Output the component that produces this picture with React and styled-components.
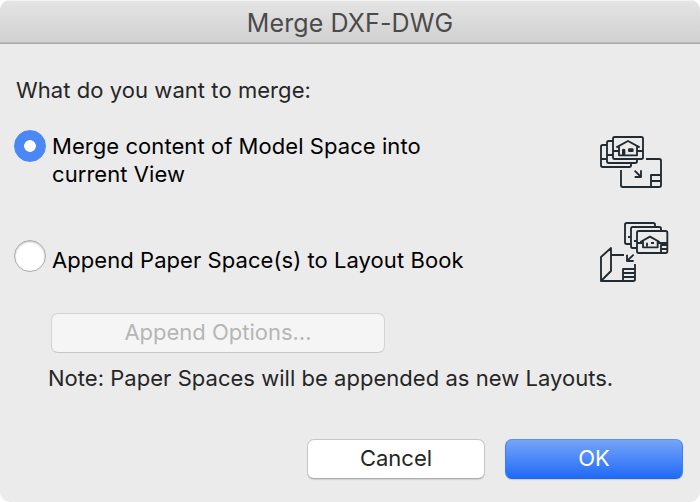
import { useState } from "react";
import styled, { createGlobalStyle, css } from "styled-components";

const GlobalStyle = createGlobalStyle`
  * {
    box-sizing: border-box;
  }

  body {
    margin: 0;
    background: #fff;
    font-family: Inter, "Liberation Sans", sans-serif;
  }
`;

const Dialog = styled.div`
  width: 700px;
  height: 502px;
  overflow: hidden;
  border-radius: 10px;
  background: #ebebeb;
  color: #000;
  font-size: 22px;
  line-height: 28px;
  white-space: nowrap;
`;

const TitleBar = styled.header`
  display: flex;
  align-items: center;
  justify-content: center;
  height: 44px;
  border-bottom: 1px solid #a8a8a8;
  background: linear-gradient(#e5e5e5, #d0d0d0);
  box-shadow: inset 0 1px 0 #f4f4f4, inset 0 -1px 0 #bdbdbd;
`;

const Title = styled.h1`
  margin: 0;
  padding-top: 2px;
  color: #4b4b4b;
  font-size: 25px;
  font-weight: 400;
  letter-spacing: 0.12px;
`;

const Text = styled.span`
  display: block;
  color: ${(props) => props.$color || "#000"};
  letter-spacing: ${(props) => props.$spacing || "0"};
`;

const Prompt = styled.div`
  padding: 32px 0 0 16px;
  height: 81px;
`;

const Option = styled.label`
  display: grid;
  grid-template-columns: 32px 1fr 90px;
  column-gap: 6px;
  align-items: start;
  height: ${(props) => props.$height};
  padding: 0 20px 0 14px;
`;

const Radio = styled.input`
  appearance: none;
  width: 32px;
  height: 32px;
  margin: ${(props) => props.$top} 0 0;
  border: 1px solid #acacac;
  border-radius: 50%;
  background: #fff;
  box-shadow: inset 0 1px 2px #bbb;

  &:checked {
    border-color: #4a88f5;
    background: radial-gradient(circle, #fff 5.5px, #4a88f5 6.2px);
    box-shadow: none;
  }
`;

const OptionLabel = styled.div`
  padding-top: ${(props) => props.$top};
`;

const Drawing = styled.svg`
  display: block;
  fill: none;
  stroke: #222b32;
  stroke-width: 5.6;
  stroke-linejoin: round;
`;

const Button = styled.button`
  display: flex;
  justify-content: center;
  width: ${(props) => props.$width};
  height: 40px;
  padding: 4px 0 0;
  border: 1px solid #c8c8c8;
  border-bottom-color: #aeaeae;
  border-radius: 7px;
  background: #fff;
  box-shadow: 0 1px 1px rgba(0, 0, 0, 0.12);
  font: inherit;

  ${(props) =>
    props.$primary &&
    css`
      border-color: #5b92f6 #3f7ff3 #1e66ee;
      background: linear-gradient(#75a5f8, #216af7);
    `}

  &:disabled {
    border-color: #d3d3d3;
    border-bottom-color: #c8c8c8;
    background: #f5f5f5;
    box-shadow: none;
  }
`;

const AppendSection = styled.section`
  padding: 21px 0 0 51px;
`;

const Note = styled.div`
  padding: 11px 0 0 48px;
`;

const Footer = styled.footer`
  display: flex;
  justify-content: flex-end;
  gap: 20px;
  padding: 47px 17px 0 0;
`;

function ModelSpaceIcon() {
  return (
    <Drawing width="90" height="75" viewBox="0 0 270 225">
      <path d="M51 60H38q-5 0-5 5V121q0 5 5 5H118q5 0 5-5V114" />
      <path d="M69 48H56q-5 0-5 5V109q0 5 5 5H136q5 0 5-5V102M33 102H51M51 90H69" />
      <rect x="69" y="36" width="90" height="66" rx="5" />
      <path d="M69 78H87M141 78H159" />
      <path d="M79 67L114 48L149 67M87 64V91H141V64" />
      <path d="M96 90V75q0-4 5-4t5 4V90Z" fill="#222b32" stroke="none" />
      <rect x="114" y="70" width="17" height="11" rx="4" fill="#222b32" stroke="none" />
      <path d="M168 102H208q5 0 5 5V181q0 5-5 5H98q-5 0-5-5V135" />
      <path d="M213 150H183V186M183 168H213" />
      <path d="M134 137L153 156M153 136V156H134" />
    </Drawing>
  );
}

function PaperSpaceIcon() {
  return (
    <Drawing width="90" height="80" viewBox="0 0 270 240">
      <path d="M195 45V38q0-5-5-5H110q-5 0-5 5V91q0 5 5 5H123M114 75H121M132 87H139" />
      <path d="M213 57V50q0-5-5-5H128q-5 0-5 5V103q0 5 5 5H141" />
      <rect x="141" y="57" width="91" height="66" rx="5" />
      <path d="M141 93H158M203 93H231M231 99H213V123M213 111H231" />
      <path d="M151 90L180 74L209 90M159 88V106H203V88" />
      <path d="M171 104V92M183 93H192" />
      <path d="M33 135L63 108V177L33 207Z" />
      <path d="M63 129H102M135 156V202q0 5-5 5H33" />
      <path d="M135 171H99V207M99 183H135M99 195H135" />
      <path d="M131 128L111 147M111 128V147H131" />
    </Drawing>
  );
}

const App = () => {
  const [mode, setMode] = useState("model");

  return (
    <>
      <GlobalStyle />
      <Dialog>
        <TitleBar>
          <Title>Merge DXF-DWG</Title>
        </TitleBar>
        <Prompt>
          <Text $color="#262626" $spacing="0.06px">
            What do you want to merge:
          </Text>
        </Prompt>
        <Option $height="87px">
          <Radio
            type="radio"
            name="mode"
            $top="5px"
            checked={mode === "model"}
            onChange={() => setMode("model")}
          />
          <OptionLabel $top="7px">
            <Text $spacing="0.06px">Merge content of Model Space into</Text>
            <Text $spacing="0.06px">current View</Text>
          </OptionLabel>
          <ModelSpaceIcon />
        </Option>
        <Option $height="80px">
          <Radio
            type="radio"
            name="mode"
            $top="28px"
            checked={mode === "paper"}
            onChange={() => setMode("paper")}
          />
          <OptionLabel $top="34px">
            <Text $spacing="0.06px">Append Paper Space(s) to Layout Book</Text>
          </OptionLabel>
          <PaperSpaceIcon />
        </Option>
        <AppendSection>
          <Button $width="334px" disabled={mode === "model"}>
            <Text $color={mode === "model" ? "#b6b6b6" : "#262626"}>
              Append Options…
            </Text>
          </Button>
        </AppendSection>
        <Note>
          <Text $color="#262626" $spacing="0.03px">
            Note: Paper Spaces will be appended as new Layouts.
          </Text>
        </Note>
        <Footer>
          <Button $width="178px">
            <Text $color="#262626">Cancel</Text>
          </Button>
          <Button $width="178px" $primary>
            <Text $color="#fff">OK</Text>
          </Button>
        </Footer>
      </Dialog>
    </>
  );
};

export default App;
